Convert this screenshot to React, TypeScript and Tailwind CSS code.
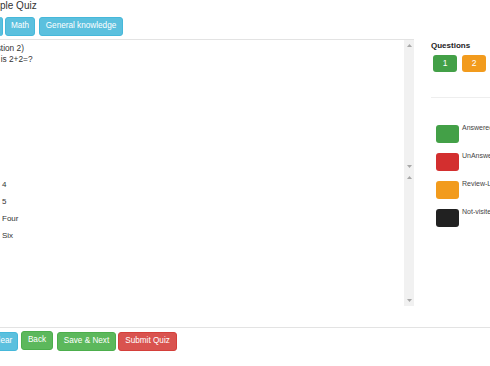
import React from "react";

function ScrollBar() {
  return (
    <div className="w-[10px] h-full bg-[#f1f1f1] flex flex-col items-center justify-between py-[4px]">
      <svg width="5" height="3" viewBox="0 0 5 3"><path d="M0 3 L2.5 0 L5 3 Z" fill="#a8a8a8" /></svg>
      <svg width="5" height="3" viewBox="0 0 5 3"><path d="M0 0 L5 0 L2.5 3 Z" fill="#a8a8a8" /></svg>
    </div>
  );
}

function Btn({ children, className }: { children: React.ReactNode; className: string }) {
  return (
    <div className={"h-[19px] rounded-[3px] border flex items-center justify-center text-white text-[8.2px] whitespace-nowrap shrink-0 " + className}>
      {children}
    </div>
  );
}

const legend = [
  { c: "bg-[#43a047]", t: "Answered" },
  { c: "bg-[#d32f2f]", t: "UnAnswered" },
  { c: "bg-[#f29b1d]", t: "Review-Later" },
  { c: "bg-[#212121]", t: "Not-visited" },
];

export default function App() {
  return (
    <div className="w-[490px] h-[366px] overflow-hidden bg-white font-['Liberation_Sans',Arial,sans-serif] text-[#333]">
      <div className="text-[10px] leading-[12px] h-[12px] whitespace-nowrap">ple Quiz</div>
      <div className="flex mt-[5px] h-[19px]">
        <div className="w-[3px] h-[19px] rounded-r-[3px] bg-[#5bc0de] border-r border-[#46b8da]" />
        <Btn className="ml-[2px] w-[30px] bg-[#5bc0de] border-[#46b8da]">Math</Btn>
        <Btn className="ml-[4px] w-[84px] bg-[#5bc0de] border-[#46b8da]">General knowledge</Btn>
      </div>
      <div className="flex mt-[3px]">
        <div className="w-[414px] h-[267px] border-t border-[#e3e3e3] flex flex-col shrink-0">
          <div className="h-[132px] flex">
            <div className="flex-1 overflow-hidden text-[8.3px] leading-[11px] pt-[3px] whitespace-nowrap">
              <div className="-ml-[19px]">Question 2)</div>
              <div className="-ml-[21px]">What is 2+2=?</div>
            </div>
            <ScrollBar />
          </div>
          <div className="h-[134px] flex">
            <div className="flex-1 overflow-hidden text-[8px] leading-[17px] pt-[4px] whitespace-nowrap">
              {["4", "5", "Four", "Six"].map((o) => (
                <div key={o} className="flex items-center -ml-[14px]">
                  <span className="inline-block w-[8px] h-[8px] rounded-full border border-[#888] mr-[8px]" />
                  <span>{o}</span>
                </div>
              ))}
            </div>
            <ScrollBar />
          </div>
        </div>
        <div className="ml-[17px] flex-1 flex flex-col">
          <div className="mt-[2px] text-[8px] leading-[10px] font-bold text-[#222]">Questions</div>
          <div className="flex mt-[3.5px] ml-[2px] gap-[5px]">
            <div className="w-[24px] h-[17px] rounded-[3px] bg-[#43a047] text-white text-[8.5px] flex items-center justify-center">1</div>
            <div className="w-[24px] h-[17px] rounded-[3px] bg-[#f29b1d] text-white text-[8.5px] flex items-center justify-center">2</div>
          </div>
          <div className="mt-[25px] h-px bg-[#eeeeee]" />
          <div className="mt-[27px] flex flex-col gap-[10px] ml-[5px]">
            {legend.map((l) => (
              <div key={l.t} className="flex items-start">
                <div className={"w-[23px] h-[18px] rounded-[3px] shrink-0 " + l.c} />
                <div className="ml-[3px] -mt-[2px] text-[7px] leading-[9px] whitespace-nowrap text-[#444]">{l.t}</div>
              </div>
            ))}
          </div>
        </div>
      </div>
      <div className="mt-[21px] h-px bg-[#e3e3e3]" />
      <div className="flex items-start mt-[3px]">
        <Btn className="-ml-[13px] mt-[1px] w-[31px] bg-[#5bc0de] border-[#46b8da]">Clear</Btn>
        <Btn className="ml-[3px] w-[32px] bg-[#5cb85c] border-[#4cae4c]">Back</Btn>
        <Btn className="ml-[4px] mt-[1px] w-[59px] bg-[#5cb85c] border-[#4cae4c]">Save &amp; Next</Btn>
        <Btn className="ml-[2px] mt-[1px] w-[59px] bg-[#d9534f] border-[#d43f3a]">Submit Quiz</Btn>
      </div>
    </div>
  );
}
